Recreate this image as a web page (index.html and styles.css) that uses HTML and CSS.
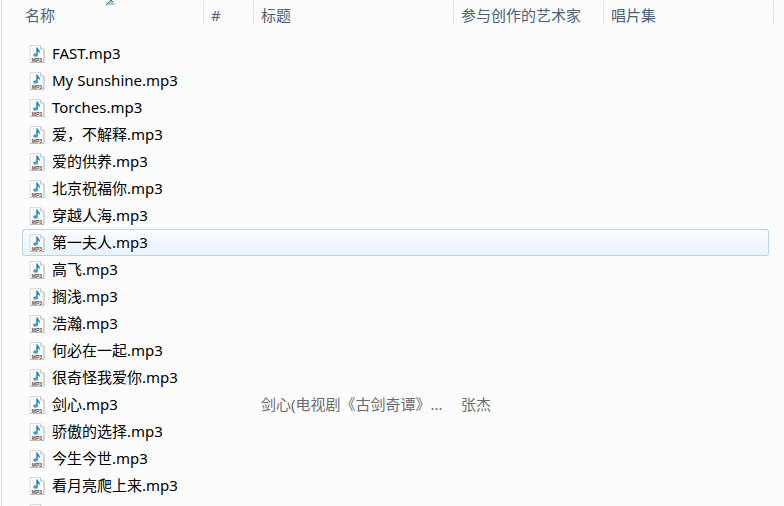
FILE: index.html
```html
<!DOCTYPE html>
<html lang="zh-CN">
<head>
    <meta charset="UTF-8">
    <meta name="viewport" content="width=device-width, initial-scale=1.0">
    <title>音乐</title>
    <link rel="stylesheet" href="styles.css">
</head>
<body>

    <!-- MP3 文件图标 -->
    <svg class="defs" width="0" height="0" aria-hidden="true">
        <symbol id="mp3" viewBox="0 0 16 18">
            <path d="M1 .5h10.500l3.500 3.500v13.500H1z" fill="#fafafa" stroke="#dcdcdc"/>
            <path d="M15 4v13.500H1" fill="none" stroke="#bdbdbd"/>
            <path d="M11.500 .5V4H15" fill="#ececec" stroke="#c9c9c9"/>
            <path d="M7.300 2.500h1.300c.3 1.900 3 2.700 2.400 6-.4-1.400-1.200-1.900-2.200-2.100V10.500H7.300z" fill="#1f86b8"/>
            <ellipse cx="6.500" cy="10" rx="2.400" ry="1.800" fill="#35a5d6"/>
            <text x="8" y="16.500" text-anchor="middle" class="icon-label">MP3</text>
        </symbol>
    </svg>

    <div class="explorer">
        <table class="files">
            <colgroup>
                <col class="col-name">
                <col class="col-num">
                <col class="col-title">
                <col class="col-artist">
                <col class="col-album">
                <col class="col-end">
            </colgroup>
            <thead>
                <tr>
                    <th class="sorted" aria-sort="ascending">
                        <button type="button">名称</button>
                        <svg class="arrow" width="10" height="5" viewBox="0 0 10 5" aria-hidden="true">
                            <path d="M0 5L5 0l5 5z" fill="#a9cbdd"/>
                            <path d="M0 5L5 0l2 2" fill="none" stroke="#3f6a8a"/>
                        </svg>
                    </th>
                    <th><button type="button">#</button></th>
                    <th><button type="button">标题</button></th>
                    <th><button type="button">参与创作的艺术家</button></th>
                    <th class="last"><button type="button">唱片集</button></th>
                    <th></th>
                </tr>
            </thead>
            <tbody>
                <tr><td><svg class="icon"><use href="#mp3"/></svg>FAST.mp3</td><td></td><td></td><td></td><td></td></tr>
                <tr><td><svg class="icon"><use href="#mp3"/></svg>My Sunshine.mp3</td><td></td><td></td><td></td><td></td></tr>
                <tr><td><svg class="icon"><use href="#mp3"/></svg>Torches.mp3</td><td></td><td></td><td></td><td></td></tr>
                <tr><td><svg class="icon"><use href="#mp3"/></svg>爱，不解释.mp3</td><td></td><td></td><td></td><td></td></tr>
                <tr><td><svg class="icon"><use href="#mp3"/></svg>爱的供养.mp3</td><td></td><td></td><td></td><td></td></tr>
                <tr><td><svg class="icon"><use href="#mp3"/></svg>北京祝福你.mp3</td><td></td><td></td><td></td><td></td></tr>
                <tr><td><svg class="icon"><use href="#mp3"/></svg>穿越人海.mp3</td><td></td><td></td><td></td><td></td></tr>
                <tr class="selected"><td><svg class="icon"><use href="#mp3"/></svg>第一夫人.mp3</td><td></td><td></td><td></td><td></td></tr>
                <tr><td><svg class="icon"><use href="#mp3"/></svg>高飞.mp3</td><td></td><td></td><td></td><td></td></tr>
                <tr><td><svg class="icon"><use href="#mp3"/></svg>搁浅.mp3</td><td></td><td></td><td></td><td></td></tr>
                <tr><td><svg class="icon"><use href="#mp3"/></svg>浩瀚.mp3</td><td></td><td></td><td></td><td></td></tr>
                <tr><td><svg class="icon"><use href="#mp3"/></svg>何必在一起.mp3</td><td></td><td></td><td></td><td></td></tr>
                <tr><td><svg class="icon"><use href="#mp3"/></svg>很奇怪我爱你.mp3</td><td></td><td></td><td></td><td></td></tr>
                <tr><td><svg class="icon"><use href="#mp3"/></svg>剑心.mp3</td><td></td><td>剑心(电视剧《古剑奇谭》...</td><td>张杰</td><td></td></tr>
                <tr><td><svg class="icon"><use href="#mp3"/></svg>骄傲的选择.mp3</td><td></td><td></td><td></td><td></td></tr>
                <tr><td><svg class="icon"><use href="#mp3"/></svg>今生今世.mp3</td><td></td><td></td><td></td><td></td></tr>
                <tr><td><svg class="icon"><use href="#mp3"/></svg>看月亮爬上来.mp3</td><td></td><td></td><td></td><td></td></tr>
                <tr><td><svg class="icon"><use href="#mp3"/></svg></td><td></td><td></td><td></td><td></td></tr>
            </tbody>
        </table>
    </div>

</body>
</html>
```

FILE: styles.css
```css
body {
    font-family: "Noto Sans", "Noto Sans CJK SC", sans-serif;
    font-size: 15px;
    line-height: 20px;
    color: #000;
    background-color: #fcfcfc;
    margin: 0;
}

.defs {
    display: none;
}

.explorer {
    box-sizing: border-box;
    height: 100vh;
    overflow: hidden;
    margin-left: 1px;
    padding: 0 10px 0 20px;
    border-left: 1px solid #c5e3f0;
}

.files {
    width: 100%;
    table-layout: fixed;
    border-collapse: separate;
    border-spacing: 0;
}

.col-name {
    width: 182px;
}

.col-num {
    width: 50px;
}

.col-title {
    width: 200px;
}

.col-artist {
    width: 150px;
}

.col-end {
    width: 5px;
}

/* 表头 */
.files th {
    position: relative;
    height: 40px;
    padding: 5px 0 0 7px;
    box-sizing: border-box;
    vertical-align: top;
    text-align: left;
    background: linear-gradient(#e9edf5, #dde3ee) right top / 1px 24px no-repeat;
}

.files th.sorted {
    padding-left: 3px;
}

.files th.last {
    background: none;
}

.files th button {
    display: block;
    padding: 0;
    border: none;
    background: none;
    font: inherit;
    font-weight: normal;
    color: #4c607a;
    white-space: nowrap;
    cursor: pointer;
}

.arrow {
    position: absolute;
    top: 0;
    left: 50%;
    margin-left: -7px;
}

/* 文件行 */
.files td {
    box-sizing: border-box;
    height: 27px;
    padding: 0 0 0 7px;
    border: solid transparent;
    border-width: 1px 0;
    line-height: 25px;
    color: #6d6d6d;
    white-space: nowrap;
}

.files td:first-child {
    padding-left: 6px;
    border-left-width: 1px;
    color: #000;
}

.files td:last-child {
    border-right-width: 1px;
}

.icon {
    width: 16px;
    height: 18px;
    margin-right: 7px;
    vertical-align: -4px;
}

.icon-label {
    font-family: "Liberation Sans", sans-serif;
    font-size: 5px;
    font-weight: bold;
    fill: #555;
}

.selected td {
    background: linear-gradient(#fafcff, #eaf2fd) padding-box;
    border-color: #b8d6ea;
}

.selected td:first-child {
    border-radius: 3px 0 0 3px;
}

.selected td:last-child {
    border-radius: 0 3px 3px 0;
}
```
